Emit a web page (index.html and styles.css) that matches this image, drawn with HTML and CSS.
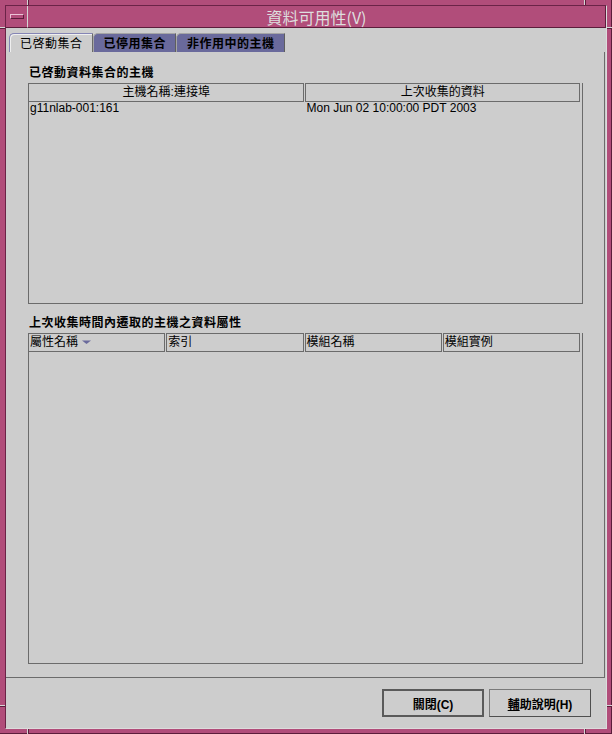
FILE: index.html
```html
<!DOCTYPE html>
<html lang="zh-Hant">
<head>
<meta charset="utf-8">
<title>資料可用性</title>
<link rel="stylesheet" href="styles.css">
</head>
<body>
<div class="window">
  <span class="tick tv tick-top-l"></span>
  <span class="tick tv tick-top-r"></span>
  <span class="tick tv tick-bot-l"></span>
  <span class="tick tv tick-bot-r"></span>
  <span class="tick th-tick tick-left-t"></span>
  <span class="tick th-tick tick-left-b"></span>
  <span class="tick th-tick tick-right-t"></span>
  <span class="tick th-tick tick-right-b"></span>
  <div class="inner">
    <div class="titlerow">
      <div class="minbtn"><span class="minbar"></span></div>
      <div class="titlebar"><span class="title">資料可用性(V)</span></div>
    </div>
    <div class="content">
      <div class="tabs">
        <div class="tab active">已啓動集合</div>
        <div class="tab">已停用集合</div>
        <div class="tab">非作用中的主機</div>
      </div>
      <div class="panel">
        <div class="label">已啓動資料集合的主機</div>
        <div class="table t1">
          <div class="thead">
            <div class="th c">主機名稱:連接埠</div>
            <div class="th c">上次收集的資料</div>
          </div>
          <div class="tr">
            <div class="td">g11nlab-001:161</div>
            <div class="td">Mon Jun 02 10:00:00 PDT 2003</div>
          </div>
        </div>
        <div class="label second">上次收集時間內遷取的主機之資料屬性</div>
        <div class="table t2">
          <div class="thead">
            <div class="th">屬性名稱<svg class="sort" width="9" height="5" viewBox="0 0 9 5"><polygon points="0,0.5 9,0.5 4.5,4" fill="#6a6a9c"/></svg></div>
            <div class="th">索引</div>
            <div class="th">模組名稱</div>
            <div class="th">模組實例</div>
          </div>
        </div>
      </div>
      <div class="buttons">
        <button class="btn default">關閉(C)</button>
        <button class="btn"><span class="mn">輔</span>助說明(H)</button>
      </div>
    </div>
  </div>
</div>
</body>
</html>
```
FILE: styles.css
```css
* { box-sizing: border-box; }
html, body { margin: 0; padding: 0; }
body {
  width: 612px;
  height: 734px;
  overflow: hidden;
  font-family: "Liberation Sans", "Noto Sans CJK TC", sans-serif;
  font-size: 12px;
  color: #000;
}
.window {
  position: relative;
  width: 612px;
  height: 734px;
  background: #b14d7a;
  padding: 5px;
  box-shadow: inset -1px -1px 0 #5c1d3b;
}
.tick { position: absolute; background: #d6d6d6; }
.tv { width: 1px; height: 5px; box-shadow: 1px 0 0 #5c1d3b; }
.th-tick { width: 5px; height: 1px; box-shadow: 0 1px 0 #5c1d3b; }
.tick-top-l { left: 27px; top: 0; }
.tick-top-r { left: 584px; top: 0; }
.tick-bot-l { left: 27px; top: 729px; }
.tick-bot-r { left: 584px; top: 729px; }
.tick-left-t { left: 0; top: 27px; }
.tick-left-b { left: 0; top: 705px; }
.tick-right-t { left: 607px; top: 27px; }
.tick-right-b { left: 607px; top: 705px; }

.inner {
  height: 100%;
  display: flex;
  flex-direction: column;
  border-top: 1px solid #6b2347;
  border-left: 1px solid #6b2347;
  border-right: 1px solid #dcdcdc;
  border-bottom: 1px solid #dcdcdc;
}
.titlerow { display: flex; height: 22px; }
.minbtn {
  width: 21px;
  display: flex;
  align-items: center;
  justify-content: center;
  border-bottom: 1px solid #5c1d3b;
}
.minbar {
  width: 14px;
  height: 5px;
  border-top: 1px solid #ecc3d6;
  border-left: 1px solid #ecc3d6;
  border-right: 1px solid #5c1d3b;
  border-bottom: 1px solid #5c1d3b;
}
.titlebar {
  flex: 1;
  display: flex;
  align-items: center;
  justify-content: center;
  border-left: 1px solid #d4d4d4;
  border-bottom: 1px solid #5c1d3b;
  border-right: 1px solid #5c1d3b;
}
.title {
  font-family: "Noto Sans CJK TC", "DejaVu Sans", sans-serif;
  font-size: 16px;
  line-height: 18px;
  color: #dedede;
}
.content {
  flex: 1;
  background: #cdcdcd;
  display: flex;
  flex-direction: column;
  padding: 5px 1px 0 0;
}
.tabs { display: flex; height: 19px; padding-left: 3px; }
.tab {
  height: 19px;
  padding: 0 9px 0 10px;
  border: 1px solid #a5a5a5;
  border-right-color: #5e5e5e;
  border-bottom: none;
  border-top-left-radius: 5px;
  background: #6a6a9c;
  font-family: "Noto Sans CJK TC", sans-serif;
  font-weight: bold;
  letter-spacing: 0.5px;
  line-height: 17px;
}
.tab.active {
  background: #cdcdcd;
  border-color: #8585b5;
  border-right-color: #6a6a6a;
  font-weight: normal;
  box-shadow: inset 1px 1px 0 #efefef;
}
.panel {
  height: 626px;
  border-right: 1px solid #6b6b6b;
  border-bottom: 1px solid #6b6b6b;
  padding: 13px 21px 13px 22px;
  display: flex;
  flex-direction: column;
}
.label {
  font-family: "Noto Sans CJK TC", sans-serif;
  font-weight: bold;
  line-height: 14px;
  letter-spacing: 0.5px;
  padding-left: 1px;
  margin-bottom: 4px;
}
.label.second { margin-top: 11px; }
.table {
  border: 1px solid #6b6b6b;
  border-top: none;
}
.table.t1 { height: 221px; }
.table.t2 { height: 331px; }
.thead { display: flex; gap: 1px; margin: 0 2px 0 -1px; }
.th {
  flex: 1 1 0;
  height: 19px;
  border: 1px solid #6b6b6b;
  line-height: 17px;
  padding-left: 1px;
  white-space: nowrap;
  overflow: hidden;
  font-family: "Liberation Sans", "Noto Sans CJK TC", sans-serif;
}
.th.c { text-align: center; }
.sort { margin-left: 4px; vertical-align: 1px; }
.tr { display: flex; gap: 1px; margin: 0 2px 0 -1px; }
.td {
  flex: 1 1 0;
  line-height: 13px;
  padding-left: 2px;
  white-space: nowrap;
}
.buttons {
  display: flex;
  justify-content: flex-end;
  gap: 5px;
  padding: 11px 14px 0 0;
}
.btn {
  width: 102px;
  height: 28px;
  padding: 0;
  background: #cdcdcd;
  color: #000;
  font-family: "Liberation Sans", "Noto Sans CJK TC", sans-serif;
  font-weight: bold;
  font-size: 12px;
  border: 1px solid #7a7a7a;
  border-right-color: #4f4f4f;
  border-bottom-color: #4f4f4f;
}
.btn.default { border: 2px solid #5a5a5a; }
.mn { text-decoration: underline; }
```
